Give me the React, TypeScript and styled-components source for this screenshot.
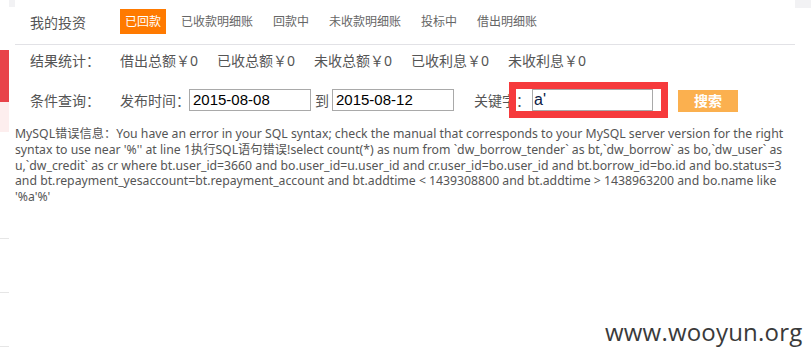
import React from "react";
import styled, { createGlobalStyle } from "styled-components";

const Global = createGlobalStyle`
  html, body { margin: 0; padding: 0; background: #fff; }
  body { font-family: "Noto Sans", "Noto Sans CJK SC", sans-serif; }
`;

const Page = styled.div`
  position: relative;
  display: grid;
  grid-template-columns: 9px 6px 780px 16px;
  width: 811px;
  height: 360px;
  overflow: hidden;
`;

const Strip = styled.div`
  display: flex;
  flex-direction: column;
`;

const StripBlock = styled.div<{ $h: number; $bg: string }>`
  height: ${(p) => p.$h}px;
  background: ${(p) => p.$bg};
  flex: none;
`;

const StripRule = styled.div<{ $gap: number }>`
  margin-top: ${(p) => p.$gap}px;
  height: 1px;
  background: #e6e6e6;
  flex: none;
`;

const Gutter = styled.div`
  display: flex;
  flex-direction: column;
`;

const Corner = styled.div<{ $h: number }>`
  height: ${(p) => p.$h}px;
  background: #f2f2f4;
`;

const Main = styled.div`
  display: flex;
  flex-direction: column;
  color: #555;
`;

const NavRow = styled.div`
  display: flex;
  align-items: center;
  border-bottom: 1px solid #e2e2e6;
  padding-left: 15px;
  box-sizing: border-box;
  height: 45px;
`;

const RowLabel = styled.div`
  width: 90px;
  flex: none;
  font-size: 14px;
  color: #555;
`;

const Tab = styled.div<{ $active?: boolean }>`
  font-size: 12px;
  height: 25px;
  line-height: 25px;
  padding: 0 5px;
  margin-right: 10px;
  color: ${(p) => (p.$active ? "#fff" : "#666")};
  background: ${(p) => (p.$active ? "#ff7a00" : "transparent")};
  margin-top: -2px;
`;

const StatRow = styled.div`
  display: flex;
  align-items: center;
  height: 30px;
  padding-left: 15px;
  font-size: 14px;
`;

const Stat = styled.div`
  width: 97px;
  flex: none;
  color: #555;
  white-space: nowrap;
`;

const QueryRow = styled.div`
  display: flex;
  align-items: center;
  height: 44px;
  padding-left: 15px;
  font-size: 14px;
  margin-top: 3px;
`;

const FieldLabel = styled.span`
  color: #555;
  white-space: nowrap;
  margin-right: -1px;
`;

const DateInput = styled.div`
  width: 122px;
  height: 22px;
  box-sizing: border-box;
  border: 1px solid #a9a9a9;
  font-family: "Liberation Sans", Arial, sans-serif;
  font-size: 15px;
  line-height: 20px;
  color: #000;
  padding-left: 3px;
`;

const To = styled.span`
  margin: 0 3px 0 4px;
  color: #555;
`;

const KeyLabel = styled.span`
  margin-left: 20px;
  color: #555;
`;

const KeyInput = styled.div`
  width: 121px;
  height: 22px;
  box-sizing: border-box;
  border: 1px solid #a9a9a9;
  font-family: "Liberation Sans", Arial, sans-serif;
  font-size: 16px;
  line-height: 20px;
  color: #0b1a45;
  padding-left: 1px;
  margin-left: 2px;
`;

const SearchButton = styled.div`
  margin-left: 25px;
  width: 60px;
  height: 22px;
  line-height: 22px;
  text-align: center;
  background: #fbb04f;
  color: #fff;
  font-size: 14px;
  font-weight: bold;
  margin-top: 2px;
`;

const ErrorBox = styled.div`
  margin-top: 4px;
  font-size: 12.25px;
  line-height: 15.75px;
  color: #555;
`;

const ErrorLine = styled.div`
  white-space: pre;
`;

const Annotation = styled.div`
  position: absolute;
  left: 509px;
  top: 82px;
  width: 159px;
  height: 36px;
  box-sizing: border-box;
  border: 7px solid #f63a3c;
  pointer-events: none;
`;

const Watermark = styled.div`
  position: absolute;
  left: 605px;
  top: 315px;
  font-family: "Open Sans", "Noto Sans", sans-serif;
  font-size: 24px;
  color: #3a3a3a;
  letter-spacing: 0.2px;
`;

const errorLines = [
  "MySQL错误信息：You have an error in your SQL syntax; check the manual that corresponds to your MySQL server version for the right",
  "syntax to use near '%'' at line 1执行SQL语句错误!select count(*) as num from `dw_borrow_tender` as bt,`dw_borrow` as bo,`dw_user` as",
  "u,`dw_credit` as cr where bt.user_id=3660 and bo.user_id=u.user_id and cr.user_id=bo.user_id and bt.borrow_id=bo.id and bo.status=3",
  "and bt.repayment_yesaccount=bt.repayment_account and bt.addtime < 1439308800 and bt.addtime > 1438963200 and bo.name like",
  "'%a'%'",
];

const tabs = ["已回款", "已收款明细账", "回款中", "未收款明细账", "投标中", "借出明细账"];
const stats = ["借出总额￥0", "已收总额￥0", "未收总额￥0", "已收利息￥0", "未收利息￥0"];

export default function App() {
  return (
    <>
      <Global />
      <Page>
        <Strip>
          <StripBlock $h={50} $bg="#fff" />
          <StripBlock $h={52} $bg="#e8434a" />
          <StripBlock $h={30} $bg="#fdeeee" />
          <StripRule $gap={106} />
          <StripRule $gap={53} />
          <StripRule $gap={53} />
        </Strip>
        <Gutter>
          <Corner $h={7} />
        </Gutter>
        <Main>
          <NavRow>
            <RowLabel>我的投资</RowLabel>
            {tabs.map((t, i) => (
              <Tab key={t} $active={i === 0}>
                {t}
              </Tab>
            ))}
          </NavRow>
          <StatRow>
            <RowLabel>结果统计：</RowLabel>
            {stats.map((s) => (
              <Stat key={s}>{s}</Stat>
            ))}
          </StatRow>
          <QueryRow>
            <RowLabel>条件查询：</RowLabel>
            <FieldLabel>发布时间：</FieldLabel>
            <DateInput>2015-08-08</DateInput>
            <To>到</To>
            <DateInput>2015-08-12</DateInput>
            <KeyLabel>关键字：</KeyLabel>
            <KeyInput>a'</KeyInput>
            <SearchButton>搜索</SearchButton>
          </QueryRow>
          <ErrorBox>
            {errorLines.map((l, i) => (
              <ErrorLine key={i}>{l}</ErrorLine>
            ))}
          </ErrorBox>
        </Main>
        <Gutter>
          <Corner $h={8} />
        </Gutter>
        <Annotation />
        <Watermark>www.wooyun.org</Watermark>
      </Page>
    </>
  );
}
